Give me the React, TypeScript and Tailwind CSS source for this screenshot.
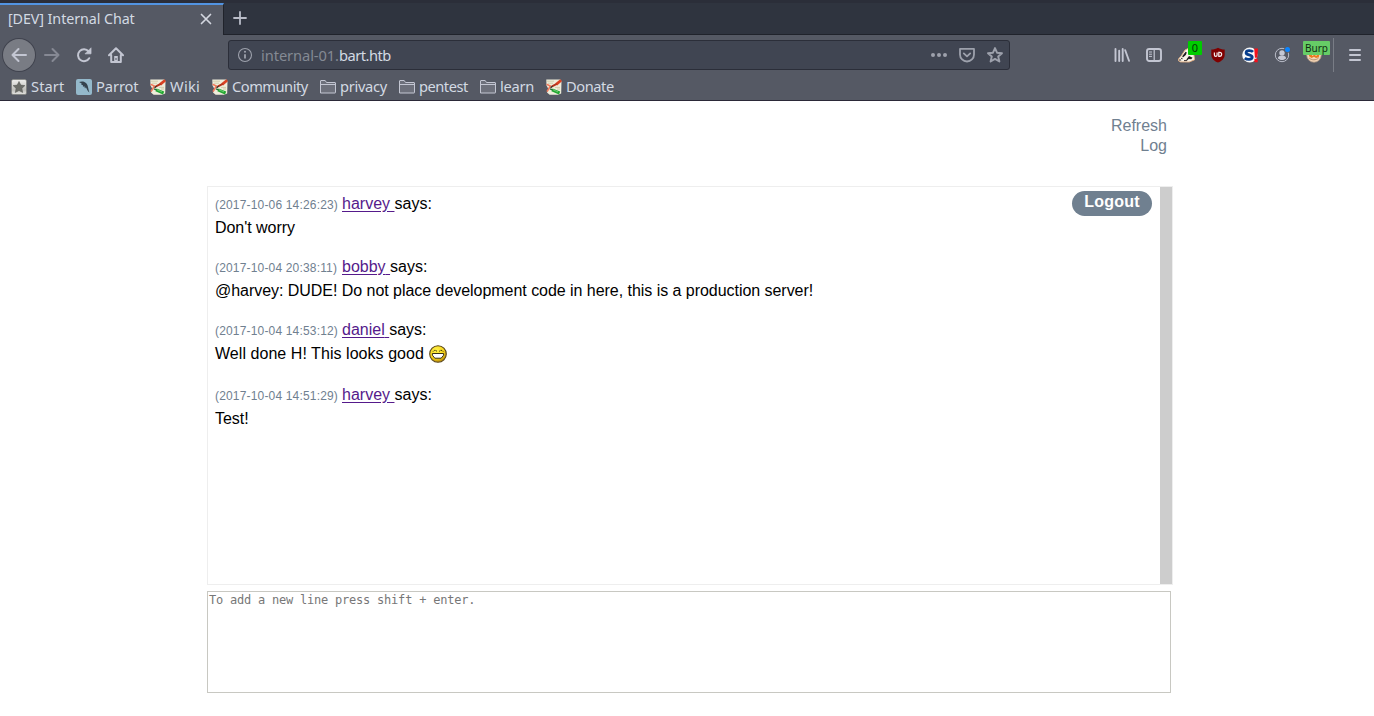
import type { ReactNode } from "react";

type IconProps = { className?: string };

const stroke = {
  fill: "none",
  stroke: "currentColor",
  strokeLinecap: "round" as const,
  strokeLinejoin: "round" as const,
};

function Back({ className = "" }: IconProps) {
  return (
    <svg viewBox="0 0 16 16" className={`size-4 ${className}`} {...stroke} strokeWidth="2">
      <path d="M15 8H1.5M7.5 2 1.5 8l6 6" />
    </svg>
  );
}

function Forward({ className = "" }: IconProps) {
  return (
    <svg viewBox="0 0 16 16" className={`size-4 ${className}`} {...stroke} strokeWidth="2">
      <path d="M1 8h13.5M8.5 2l6 6-6 6" />
    </svg>
  );
}

function Reload() {
  return (
    <svg viewBox="0 0 16 16" className="size-4" {...stroke} strokeWidth="2">
      <path d="M13.2 11.2A6 6 0 1 1 12.6 4.3" />
      <path d="M15 1.2v5.6H9.4z" fill="currentColor" strokeWidth="0.8" />
    </svg>
  );
}

function Home() {
  return (
    <svg viewBox="0 0 16 16" className="size-4" {...stroke} strokeWidth="2">
      <path d="M1 8.3 8 1.3l7 7M3.2 8v7h9.6V8" />
      <path d="M6.2 15V9h3.6v6z" fill="currentColor" stroke="none" />
      <path d="M7.5 11h1v2h-1z" fill="#555964" stroke="none" />
    </svg>
  );
}

function Info() {
  return (
    <svg viewBox="0 0 16 16" className="size-4" fill="none" stroke="currentColor">
      <circle cx="8" cy="8" r="6.5" strokeWidth="1.1" />
      <path d="M8 7.2v4.3" strokeWidth="1.8" />
      <circle cx="8" cy="4.8" r="1.05" fill="currentColor" stroke="none" />
    </svg>
  );
}

function Dots() {
  return (
    <svg viewBox="0 0 16 16" className="size-4" fill="currentColor">
      <circle cx="2" cy="8" r="2" />
      <circle cx="8" cy="8" r="2" />
      <circle cx="14" cy="8" r="2" />
    </svg>
  );
}

function Pocket() {
  return (
    <svg viewBox="0 0 16 16" className="size-4" {...stroke} strokeWidth="1.8">
      <path d="M1 1.9h14v5.6a7 7 0 0 1-14 0z" strokeWidth="1.8" />
      <path d="M4.8 6.4 8 9.4l3.2-3" />
    </svg>
  );
}

function Star() {
  return (
    <svg viewBox="0 0 16 16" className="size-4" {...stroke} strokeWidth="1.9">
      <path d="m8 1.1 2 4.6 5 .5-3.8 3.3 1.2 5L8 11.9l-4.4 2.6 1.2-5L1 6.2l5-.5z" />
    </svg>
  );
}

function Library() {
  return (
    <svg viewBox="0 0 16 16" className="size-4" {...stroke}>
      <path d="M1.5 2v12M5.2 3.6V14M8.7 2v12M11.2 3.2l3.8 10.6" strokeWidth="1.9" />
    </svg>
  );
}

function Sidebar() {
  return (
    <svg viewBox="0 0 16 16" className="size-4" {...stroke} strokeWidth="1.9">
      <rect x="1" y="2" width="14" height="12" rx="2.2" />
      <path d="M8.2 2v12" strokeWidth="1.2" />
      <path d="M3.4 5h2.2M3.4 7.2h2.2M3.4 9.4h2.2" strokeWidth="1" />
    </svg>
  );
}

function Badger() {
  return (
    <svg viewBox="0 0 17 16" className="h-4 w-[17px]">
      <path d="M.3 13.6c0-2.5 1.7-3 3-4.8L7 3 10 1.6l6 6.8.6 4.4-5.4 2.2-8.8-.1z" fill="#f8f3e8" stroke="#e3ad80" strokeWidth=".9" />
      <path d="m4.2 9.2 3.4-4.4 1.2.6-1 2.6-2.9 2.6zM8.4 12.4l2.6-3.3 3.6 1.6-1.4 1.6-2.6-.4-1.3 1.6z" fill="#211e20" />
      <path d="M1 13h2.2M3 11.2l1.6.6M6 13.6h3" stroke="#332b2b" strokeWidth="1" />
    </svg>
  );
}

function Shield() {
  return (
    <svg viewBox="0 0 16 16" className="size-4">
      <path d="M8 .8c1.8 1 4.2 1.8 6.7 1.8v4.8c0 3.9-2.6 6.4-6.7 8.2-4.1-1.8-6.7-4.3-6.7-8.2V2.6C3.8 2.6 6.2 1.8 8 .8z" fill="#800000" />
      <path d="M4.4 5.4v2.5c0 .9.5 1.4 1.3 1.4s1.4-.5 1.4-1.4V5.4M8.8 5.4h.9a1.9 1.9 0 0 1 0 3.9h-.9z" fill="none" stroke="#f5eeee" strokeWidth="1.2" />
    </svg>
  );
}

function ScriptBlocker() {
  return (
    <svg viewBox="0 0 16 16" className="size-4">
      <circle cx="7.8" cy="8" r="7.6" fill="#fafafa" />
      <path d="M11 4.9C9.7 3.5 4.2 2.9 4.1 5.7 4 8.4 10.3 7.4 10.2 10.1c-.1 3-5.6 2.5-7.4 1" fill="none" stroke="#073d8c" strokeWidth="2.8" />
      <path d="M12.2 1.5H16l-.7 9.2h-2.4zM12.4 11.8h3.3v3.4h-3.3z" fill="#f5101b" />
    </svg>
  );
}

function Account() {
  return (
    <svg viewBox="0 0 16 16" className="size-4 overflow-visible">
      <circle cx="8" cy="8" r="6.7" fill="none" stroke="#b9bcc8" strokeWidth="1" />
      <circle cx="8" cy="6" r="2.7" fill="#c4c7d3" />
      <path d="M3.8 11.2c.4-1.5 1.5-2.2 2.6-2.4h3.2c1.3.2 2.2.9 2.6 2.4-1.2 1.4-2.5 1.7-4.2 1.7s-3-.3-4.2-1.7z" fill="#c4c7d3" />
      <circle cx="13.5" cy="2.5" r="3.3" fill="#555964" />
      <circle cx="13.5" cy="2.5" r="2.5" fill="#0a84ff" />
    </svg>
  );
}

function FoxFace() {
  return (
    <svg viewBox="0 0 16 16" className="size-4">
      <circle cx="8" cy="8" r="7.3" fill="#f4d5b6" stroke="#a6917f" strokeWidth=".8" />
      <path d="M2.4 6h11.2l-.8 4.2L10 11l-2-1.2L5.6 11l-2.5-1.8z" fill="#eb7a20" />
      <path d="M3.2 11c2 2.3 7 2.6 9.5-.2" fill="none" stroke="#b79171" />
      <path d="M6 8h1.3M9.4 8h1.4" stroke="#fff" />
    </svg>
  );
}

function StartIcon() {
  return (
    <svg viewBox="0 0 16 16" className="size-4">
      <defs>
        <linearGradient id="start-plate" x2="0" y2="1">
          <stop offset="0" stopColor="#efefed" />
          <stop offset=".7" stopColor="#bfbfbb" />
          <stop offset="1" stopColor="#e4e4e2" />
        </linearGradient>
      </defs>
      <rect x=".5" y=".5" width="15" height="15" rx="1.6" fill="url(#start-plate)" stroke="#777874" strokeWidth=".6" />
      <path d="m8 2.4 1.8 3.7 4.1.5-3 2.8.8 4.1L8 11.5l-3.7 2 .8-4.1-3-2.8 4.1-.5z" fill="#6c6e69" stroke="#555753" strokeWidth=".5" />
    </svg>
  );
}

function ParrotIcon() {
  return (
    <svg viewBox="0 0 16 16" className="size-4">
      <rect width="16" height="16" rx="2" fill="#94b9cb" />
      <path d="M3 3.1c2.2-.7 4.8-.9 6.6.7 2.7 2.1 2.3 5.3 3.8 9.8-1.7-1.3-2.4-3.2-3.5-5.4L9 9.4 8.2 7 7 7.9l-.2-2L5.4 6l.2-1.6z" fill="#35434e" />
    </svg>
  );
}

function NotebookIcon() {
  return (
    <svg viewBox="0 0 16 16" className="size-4">
      <path d="M.3.5h14l1.2 1.7-.3 12.4-3.2 1.1H3.6L1 13.4l1.6-3.2L.5 6.6z" fill="#efeddb" />
      <path d="M1 2.2h7M2 4.2h5M9 8.4h5M11 10h3" stroke="#cfcaa6" strokeWidth=".9" />
      <path d="M.6 5.2 4.4 7 1 12.6" fill="none" stroke="#ef7a5c" strokeWidth="1.6" />
      <path d="m15.2 1.2-5 4.2" stroke="#d94224" strokeWidth="2.8" />
      <path d="M10.8 4.8 6 7.4" stroke="#b5331b" strokeWidth="2" />
      <path d="M6.4 7.2 4.6 8.8" stroke="#2b2018" strokeWidth="1.3" />
      <path d="m6 10.8 7.6 3.2" stroke="#22a832" strokeWidth="3" />
      <path d="m4 9.9 2.6 1" stroke="#27693a" strokeWidth="1.5" />
      <path d="m7 10.7 5 2.2" stroke="#8edb8e" strokeWidth=".7" />
    </svg>
  );
}

function Folder() {
  return (
    <svg viewBox="0 0 16 16" className="size-4">
      <path d="M.5 14V2q0-.5.5-.5h4.2l1.3 2H15q.5 0 .5.5v9.5q0 .5-.5.5z" fill="#6d707b" stroke="#c3c6d2" />
      <path d="M1 5.5h14" stroke="#c3c6d2" />
    </svg>
  );
}

function Grin() {
  return (
    <svg viewBox="0 0 18 18" className="mt-[3px] ml-[5px] size-[18px]">
      <defs>
        <radialGradient id="grin-face" cx=".4" cy=".3" r=".7">
          <stop offset="0" stopColor="#fff34a" />
          <stop offset=".65" stopColor="#f8d51c" />
          <stop offset="1" stopColor="#b98a08" />
        </radialGradient>
      </defs>
      <circle cx="9" cy="9" r="8.3" fill="url(#grin-face)" stroke="#59461a" strokeWidth="1.1" />
      <path d="m4 6.6 1.2-1.2h1.6L8 6.4M10.2 6.4l1.2-1H13l1.2 1.2" fill="none" stroke="#221c05" strokeWidth=".9" strokeDasharray="1.3 .5" />
      <path d="M3.4 8.5h11.2v1.7l-2.4 3H5.8l-2.4-3z" fill="#fff" stroke="#221c05" strokeWidth=".9" />
    </svg>
  );
}

const bookmarks: { label: string; icon: ReactNode; className: string }[] = [
  { label: "Start", icon: <StartIcon />, className: "w-[65px] tracking-[0.08px]" },
  { label: "Parrot", icon: <ParrotIcon />, className: "w-[74px] tracking-[-0.08px]" },
  { label: "Wiki", icon: <NotebookIcon />, className: "w-[62px] tracking-[0.25px]" },
  { label: "Community", icon: <NotebookIcon />, className: "w-[108px] tracking-[-0.5px]" },
  { label: "privacy", icon: <Folder />, className: "w-[79px] tracking-[-0.3px]" },
  { label: "pentest", icon: <Folder />, className: "w-[81px] tracking-[-0.5px]" },
  { label: "learn", icon: <Folder />, className: "w-[66px] tracking-[-0.25px]" },
  { label: "Donate", icon: <NotebookIcon />, className: "w-[80px] tracking-[-0.45px]" },
];

function Browser() {
  return (
    <header className="h-[101px] border-b border-[#2b2938] bg-[#555964] font-['Noto_Sans',sans-serif] text-[14.67px] text-[#d3dae3]">
      <div className="flex h-[35px] border-t-3 border-[#2b2e39] bg-[#2f343f]">
        <div className="flex h-8 w-[224px] items-center border-t-2 border-r border-t-[#5294e2] border-r-[#20232b] bg-[#555964] pb-0.5 pl-2">
          <span className="w-[192px] text-[14.3px] leading-5 tracking-[-0.08px]">[DEV] Internal Chat</span>
          <svg viewBox="0 0 12 12" className="size-3 text-[#d3d6df]" {...stroke} strokeWidth="1.7">
            <path d="m1.5 1.5 9 9m0-9-9 9" />
          </svg>
        </div>
        <div className="flex flex-1 items-center border-b border-[#20232b] pb-px pl-[9px] text-[#b9bcc8]">
          <svg viewBox="0 0 14 14" className="size-3.5" {...stroke} strokeWidth="1.8">
            <path d="M7 1v12M1 7h12" />
          </svg>
        </div>
      </div>
      <nav className="flex h-10 items-center text-[#c3c6d2]">
        <button className="ml-[3px] flex size-8 items-center justify-center rounded-full bg-[#797c84] ring-1 ring-[#40434e]">
          <Back />
        </button>
        <div className="ml-[9px] flex gap-4">
          <Forward className="text-[#868994]" />
          <Reload />
          <Home />
        </div>
        <div className="ml-[104px] flex h-[30px] w-[782px] items-center rounded-[3px] border border-[#2b2e39] bg-[#404552] pr-[6px] pl-2 text-[#9da1ac]">
          <Info />
          <span className="ml-2 flex-1 text-[14.67px] tracking-[-0.08px] text-[#848a94]">
            internal-01.<span className="tracking-[-0.5px] text-[#d3dae3]">bart.htb</span>
          </span>
          <div className="flex gap-3">
            <Dots />
            <Pocket />
            <Star />
          </div>
        </div>
        <div className="ml-[104px] flex items-center gap-4">
          <Library />
          <Sidebar />
          <div className="relative w-4">
            <Badger />
            <span className="absolute -top-1.5 left-2.5 flex h-3.5 w-3.5 items-center justify-center rounded-[1px] bg-[#00cc00] pb-px text-[11px] leading-none text-[#063606]">0</span>
          </div>
          <Shield />
          <ScriptBlocker />
          <Account />
          <div className="relative">
            <FoxFace />
            <span className="absolute -top-1.5 -left-[3px] flex h-3.5 w-[27px] items-center justify-center rounded-[1px] bg-[#66cc66] pb-px text-[10px] leading-none text-[#102d10]">Burp</span>
          </div>
        </div>
        <div className="ml-[11px] h-[34px] w-px bg-[#797d86]" />
        <svg viewBox="0 0 12 12" className="ml-[15px] size-3" {...stroke} strokeWidth="2">
          <path d="M1 1h10M1 6h10M1 11h10" />
        </svg>
      </nav>
      <div className="flex h-6 items-center pl-[11px]">
        {bookmarks.map(({ label, icon, className }) => (
          <div key={label} className={`flex shrink-0 items-center gap-1 ${className}`}>
            {icon}
            <span className="pb-0.5 leading-5">{label}</span>
          </div>
        ))}
      </div>
    </header>
  );
}

const messages: { time: string; user: string; text: string; smile?: boolean }[] = [
  { time: "2017-10-06 14:26:23", user: "harvey", text: "Don't worry" },
  { time: "2017-10-04 20:38:11", user: "bobby", text: "@harvey: DUDE! Do not place development code in here, this is a production server!" },
  { time: "2017-10-04 14:53:12", user: "daniel", text: "Well done H! This looks good", smile: true },
  { time: "2017-10-04 14:51:29", user: "harvey", text: "Test!" },
];

export default function App() {
  return (
    <div className="h-[716px] overflow-hidden bg-white font-['Liberation_Sans',sans-serif] text-base text-black">
      <Browser />
      <main className="ml-[207px] w-[966px]">
        <div className="flex h-[85px] flex-col items-end pt-[15px] pr-1.5 leading-5 text-[#708090]">
          <a>Refresh</a>
          <a>Log</a>
        </div>
        <section className="flex h-[399px] border border-[#eeeeee]">
          <div className="flex-1 pt-[5px] pl-[7px]">
            {messages.map(({ time, user, text, smile }) => (
              <article key={time} className={smile ? "h-[65px] leading-6" : "h-[63px] leading-6"}>
                <p className="flex h-6 whitespace-pre">
                  <span className="mt-px w-[127px] text-xs leading-6 tracking-[0.17px] text-[#708090]">({time})</span>
                  <a className="text-[#551a8b] underline underline-offset-2">{user} </a>says:
                </p>
                <p className={smile ? "flex tracking-[0.05px]" : "tracking-[-0.04px]"}>
                  {text}
                  {smile && <Grin />}
                </p>
              </article>
            ))}
          </div>
          <button className="mt-1 mr-2 h-[25px] w-20 rounded-full bg-[#708090] pb-1 leading-5 font-bold tracking-[0.2px] text-white">Logout</button>
          <div className="w-3 bg-[#cdcdcd]" />
        </section>
        <textarea
          className="mt-1.5 block h-[102px] w-[964px] resize-none border border-[#c8c8c2] px-px py-px font-['DejaVu_Sans_Mono',monospace] text-[12px] leading-[14px] tracking-[-0.22px] placeholder:text-[#777777]"
          placeholder="To add a new line press shift + enter."
        />
      </main>
    </div>
  );
}
